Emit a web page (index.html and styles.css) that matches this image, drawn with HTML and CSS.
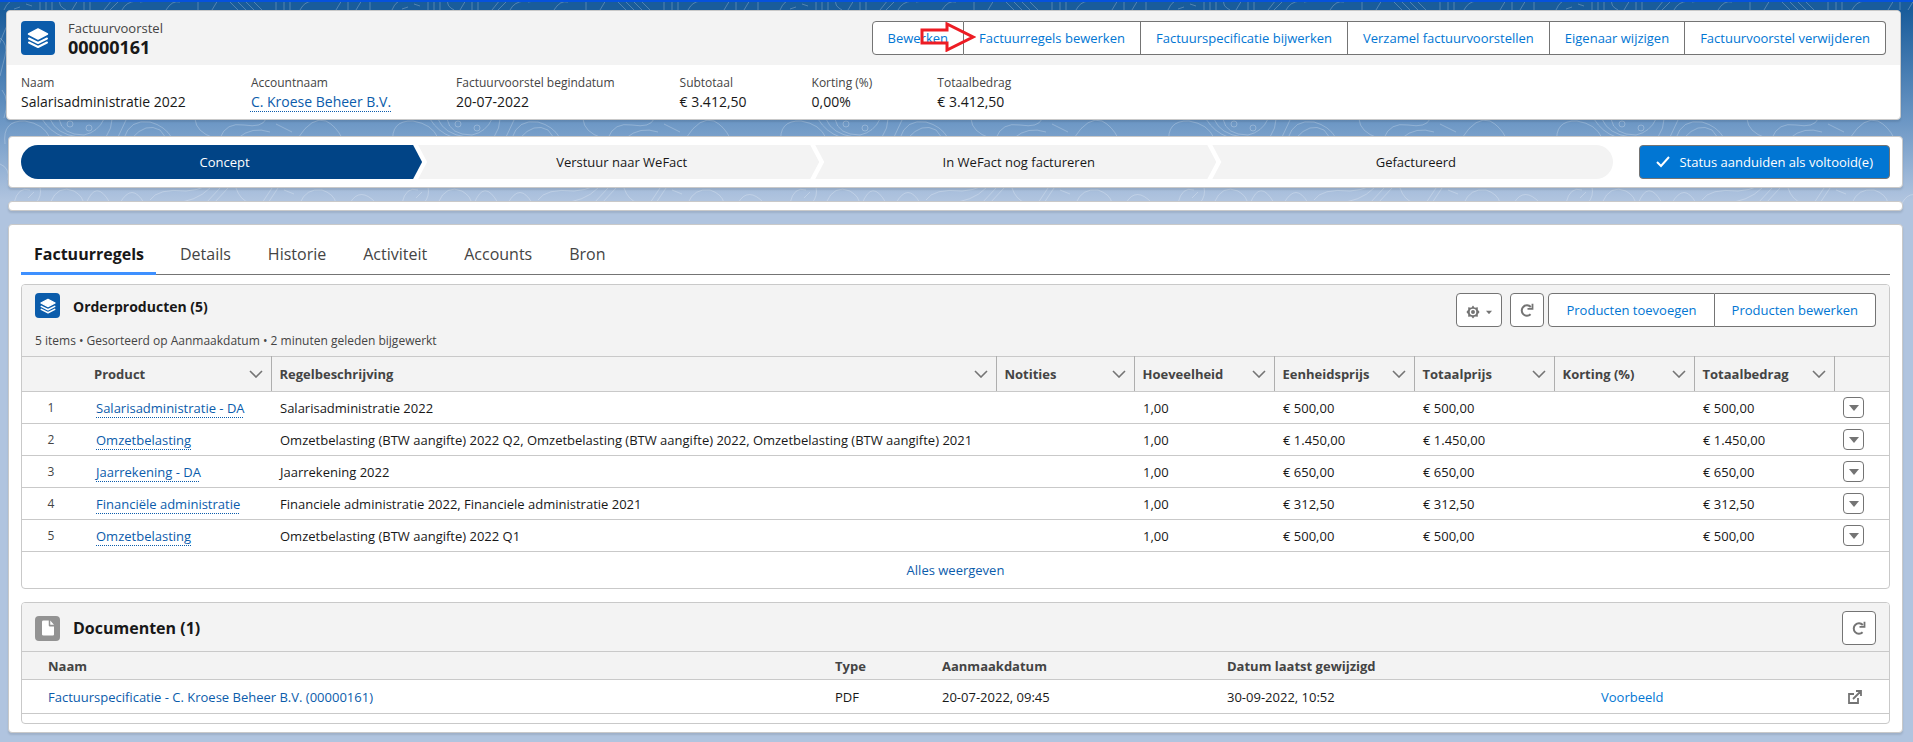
FILE: index.html
```
<!DOCTYPE html>
<html lang="nl">
<head>
    <meta charset="UTF-8">
    <meta name="viewport" content="width=device-width, initial-scale=1.0">
    <title>00000161 | Factuurvoorstel</title>
    <link rel="stylesheet" href="styles.css">
</head>
<body>
    <!-- Contour lines behind the cards -->
    <svg class="backdrop" aria-hidden="true">
        <defs>
            <pattern id="contours" width="388" height="210" patternUnits="userSpaceOnUse">
                <g fill="none" stroke="#fff" stroke-width="1" stroke-opacity="0.24">
                    <path d="M4 10 Q8 0 18 -2 M14 9 L20 7 M26 4 L32 6 M40 0 V10 M46 0 V10 M52 0 V10 M60 0 Q58 6 66 10 M72 10 L78 0 M84 0 V10 M90 0 V10 M104 10 L112 0 M110 10 L120 0 M122 10 Q126 2 136 1 M140 2 L146 1 M166 10 Q172 0 180 2 M198 0 V10 M212 10 L218 0 M228 0 L238 10 M236 0 L246 10 M244 0 L254 10 M252 0 L262 10 M276 0 V10 M284 0 V10 M290 0 V10 M300 10 Q304 2 312 1 M336 10 L342 0 M348 0 V10 M356 10 L362 0 M370 0 V10"/>
                    <path d="M-6 60 Q4 30 8 24 M0 38 Q8 44 5 56 T0 76 M2 90 Q10 100 4 118 M0 164 Q10 168 8 180 M384 40 Q392 56 386 74"/>
                    <path d="M5 144 Q2 120 25 121 Q44 124 50 138 M42 119 Q50 132 64 137 M50 119 Q56 134 78 137 M59 119 Q62 135 84 135 Q98 132 104 119 M106 137 Q112 128 112 119 M118 137 L126 120 M124 138 Q130 119 150 122 Q165 126 172 138 M132 138 Q146 122 160 130 L166 138 M195 119 Q196 132 214 138 M220 138 Q226 122 244 125 Q262 128 266 119 M238 138 Q252 126 270 132 M298 138 Q312 116 326 121 Q336 126 342 138 M276 124 L292 132"/>
                    <circle cx="70" cy="124" r="3"/>
                    <circle cx="89" cy="128" r="3"/>
                    <path d="M14 203 Q18 186 30 190 M28 198 L34 192 M36 203 Q42 196 40 187 M50 203 Q58 184 74 191 Q84 197 83 204 M86 204 Q96 178 110 203 M120 203 Q132 182 144 203 M150 200 Q158 188 186 191 Q198 190 204 187 M172 203 Q196 202 210 188 M206 203 L220 188 M214 203 L228 188 M236 188 Q240 200 250 203 M262 203 L272 188 M268 203 L278 188 M284 190 L294 194 M300 203 Q306 188 322 190 Q334 194 336 203 M350 203 Q360 186 376 203"/>
                </g>
            </pattern>
        </defs>
        <rect width="100%" height="100%" fill="url(#contours)"/>
    </svg>

    <!-- Icons shared by the whole page -->
    <svg class="sprite" aria-hidden="true">
        <symbol id="layers" viewBox="0 0 24 24">
            <path d="M12 3 L21.5 8 L12 13 L2.500 8 Z" fill="currentColor" stroke="currentColor" stroke-width="1.500" stroke-linejoin="round"/>
            <path d="M3 12.500 L12 17 L21 12.500 M3 16.500 L12 21 L21 16.500" fill="none" stroke="currentColor" stroke-width="2" stroke-linecap="round" stroke-linejoin="round"/>
        </symbol>
        <symbol id="chevron" viewBox="0 0 14 8">
            <path d="M1 1 L7 7 L13 1" fill="none" stroke="currentColor" stroke-width="1.600"/>
        </symbol>
        <symbol id="caret" viewBox="0 0 10 6">
            <path d="M0 0 H10 L5 6 Z" fill="currentColor"/>
        </symbol>
        <symbol id="refresh" viewBox="0 0 14 14">
            <path d="M10.600 11.200 A5.200 5.200 0 1 1 10.800 4" fill="none" stroke="currentColor" stroke-width="2"/>
            <path d="M12.500 0.800 V5.800 H7.500" fill="none" stroke="currentColor" stroke-width="1.800"/>
        </symbol>
    </svg>

    <div class="container">
        <header class="card record-header">
            <div class="record-top">
                <span class="object-icon large"><svg><use href="#layers"/></svg></span>
                <div class="record-title">
                    <span>Factuurvoorstel</span>
                    <h1>00000161</h1>
                </div>
                <div class="button-group">
                    <button>Bewerken</button>
                    <button>Factuurregels bewerken</button>
                    <button>Factuurspecificatie bijwerken</button>
                    <button>Verzamel factuurvoorstellen</button>
                    <button>Eigenaar wijzigen</button>
                    <button>Factuurvoorstel verwijderen</button>
                    <svg class="pointer-arrow" viewBox="0 0 56 30"><path d="M2 8 H27 V2 L53 15 L27 28 V21 H2 Z" fill="none" stroke="#ed1c24" stroke-width="3"/></svg>
                </div>
            </div>
            <dl class="fields">
                <div><dt>Naam</dt><dd>Salarisadministratie 2022</dd></div>
                <div><dt>Accountnaam</dt><dd><a class="dotted" href="#">C. Kroese Beheer B.V.</a></dd></div>
                <div><dt>Factuurvoorstel begindatum</dt><dd>20-07-2022</dd></div>
                <div><dt>Subtotaal</dt><dd>€ 3.412,50</dd></div>
                <div><dt>Korting (%)</dt><dd>0,00%</dd></div>
                <div><dt>Totaalbedrag</dt><dd>€ 3.412,50</dd></div>
            </dl>
        </header>

        <section class="card path">
            <ol class="stages">
                <li class="current">Concept</li>
                <li>Verstuur naar WeFact</li>
                <li>In WeFact nog factureren</li>
                <li>Gefactureerd</li>
            </ol>
            <button class="primary">
                <svg viewBox="0 0 14 12"><path d="M1 6 L5 10 L13 1" fill="none" stroke="currentColor" stroke-width="2"/></svg>
                Status aanduiden als voltooid(e)
            </button>
        </section>

        <div class="card spacer"></div>

        <main class="card content">
            <nav class="tabs">
                <a class="active" href="#">Factuurregels</a>
                <a href="#">Details</a>
                <a href="#">Historie</a>
                <a href="#">Activiteit</a>
                <a href="#">Accounts</a>
                <a href="#">Bron</a>
            </nav>

            <section class="related">
                <div class="related-head">
                    <span class="object-icon"><svg><use href="#layers"/></svg></span>
                    <h2>Orderproducten (5)</h2>
                    <button class="icon-button wide" aria-label="Lijstweergave-instellingen">
                        <svg class="gear" viewBox="0 0 16 16">
                            <path d="M8 0.500 L10 3 L13.500 2.500 L13.500 5.500 L15.500 8 L13.500 10.500 V13.500 L10 13 L8 15.500 L6 13 L2.500 13.500 V10.500 L0.500 8 L2.500 5.500 V2.500 L6 3 Z" fill="currentColor"/>
                            <circle cx="8" cy="8" r="3" fill="none" stroke="#fff" stroke-width="1.500"/>
                        </svg>
                        <svg class="small-caret"><use href="#caret"/></svg>
                    </button>
                    <button class="icon-button" aria-label="Vernieuwen"><svg><use href="#refresh"/></svg></button>
                    <div class="button-group">
                        <button>Producten toevoegen</button>
                        <button>Producten bewerken</button>
                    </div>
                </div>
                <p class="list-info">5 items • Gesorteerd op Aanmaakdatum • 2 minuten geleden bijgewerkt</p>
                <table class="products">
                    <colgroup>
                        <col class="col-number"><col class="col-product"><col>
                        <col class="col-notes"><col class="col-value"><col class="col-value"><col class="col-value"><col class="col-value"><col class="col-value">
                        <col class="col-menu">
                    </colgroup>
                    <thead>
                        <tr>
                            <th class="number"></th>
                            <th><span>Product<svg><use href="#chevron"/></svg></span></th>
                            <th><span>Regelbeschrijving<svg><use href="#chevron"/></svg></span></th>
                            <th><span>Notities<svg><use href="#chevron"/></svg></span></th>
                            <th><span>Hoeveelheid<svg><use href="#chevron"/></svg></span></th>
                            <th><span>Eenheidsprijs<svg><use href="#chevron"/></svg></span></th>
                            <th><span>Totaalprijs<svg><use href="#chevron"/></svg></span></th>
                            <th><span>Korting (%)<svg><use href="#chevron"/></svg></span></th>
                            <th><span>Totaalbedrag<svg><use href="#chevron"/></svg></span></th>
                            <th></th>
                        </tr>
                    </thead>
                    <tbody>
                        <tr>
                            <td class="number">1</td>
                            <td><a class="dotted" href="#">Salarisadministratie - DA</a></td>
                            <td>Salarisadministratie 2022</td>
                            <td></td><td>1,00</td><td>€ 500,00</td><td>€ 500,00</td><td></td><td>€ 500,00</td>
                            <td><button class="row-menu" aria-label="Acties"><svg><use href="#caret"/></svg></button></td>
                        </tr>
                        <tr>
                            <td class="number">2</td>
                            <td><a class="dotted" href="#">Omzetbelasting</a></td>
                            <td>Omzetbelasting (BTW aangifte) 2022 Q2, Omzetbelasting (BTW aangifte) 2022, Omzetbelasting (BTW aangifte) 2021</td>
                            <td></td><td>1,00</td><td>€ 1.450,00</td><td>€ 1.450,00</td><td></td><td>€ 1.450,00</td>
                            <td><button class="row-menu" aria-label="Acties"><svg><use href="#caret"/></svg></button></td>
                        </tr>
                        <tr>
                            <td class="number">3</td>
                            <td><a class="dotted" href="#">Jaarrekening - DA</a></td>
                            <td>Jaarrekening 2022</td>
                            <td></td><td>1,00</td><td>€ 650,00</td><td>€ 650,00</td><td></td><td>€ 650,00</td>
                            <td><button class="row-menu" aria-label="Acties"><svg><use href="#caret"/></svg></button></td>
                        </tr>
                        <tr>
                            <td class="number">4</td>
                            <td><a class="dotted" href="#">Financiële administratie</a></td>
                            <td>Financiele administratie 2022, Financiele administratie 2021</td>
                            <td></td><td>1,00</td><td>€ 312,50</td><td>€ 312,50</td><td></td><td>€ 312,50</td>
                            <td><button class="row-menu" aria-label="Acties"><svg><use href="#caret"/></svg></button></td>
                        </tr>
                        <tr>
                            <td class="number">5</td>
                            <td><a class="dotted" href="#">Omzetbelasting</a></td>
                            <td>Omzetbelasting (BTW aangifte) 2022 Q1</td>
                            <td></td><td>1,00</td><td>€ 500,00</td><td>€ 500,00</td><td></td><td>€ 500,00</td>
                            <td><button class="row-menu" aria-label="Acties"><svg><use href="#caret"/></svg></button></td>
                        </tr>
                    </tbody>
                </table>
                <a class="view-all" href="#">Alles weergeven</a>
            </section>

            <section class="related documents-card">
                <div class="related-head">
                    <span class="object-icon grey">
                        <svg viewBox="0 0 24 24"><path d="M6 2 H13 V8.500 Q13 10 14.500 10 H20 V20.500 Q20 22 18.500 22 H6 Q4 22 4 20.500 V3.500 Q4 2 6 2 Z M15 2 L20 7.500 H15 Z" fill="currentColor"/></svg>
                    </span>
                    <h2>Documenten (1)</h2>
                    <button class="icon-button" aria-label="Vernieuwen"><svg><use href="#refresh"/></svg></button>
                </div>
                <table class="documents">
                    <colgroup>
                        <col><col class="col-type"><col class="col-created"><col class="col-modified"><col class="col-preview"><col class="col-open">
                    </colgroup>
                    <thead>
                        <tr><th>Naam</th><th>Type</th><th>Aanmaakdatum</th><th>Datum laatst gewijzigd</th><th></th><th></th></tr>
                    </thead>
                    <tbody>
                        <tr>
                            <td><a href="#">Factuurspecificatie - C. Kroese Beheer B.V. (00000161)</a></td>
                            <td>PDF</td>
                            <td>20-07-2022, 09:45</td>
                            <td>30-09-2022, 10:52</td>
                            <td><a class="bright" href="#">Voorbeeld</a></td>
                            <td><a class="open" href="#" aria-label="Openen"><svg viewBox="0 0 14 14"><path d="M6 4 H1 V13 H10 V8 M5 9 L12 2 M8 1 H13 V6" fill="none" stroke="currentColor" stroke-width="1.800"/></svg></a></td>
                        </tr>
                    </tbody>
                </table>
            </section>
        </main>
    </div>
</body>
</html>
```
FILE: styles.css
```
* {
    box-sizing: border-box;
}

body {
    margin: 0;
    border-top: 2px solid #0652dd;
    background: linear-gradient(#195c9b 0, #195c9b 10px, #6f99c6 125px, #b0c4df 200px) no-repeat #b0c4df;
    color: #181818;
    font-family: 'Segoe UI', 'Open Sans', sans-serif;
    font-size: 13px;
    line-height: 18px;
}

h1, h2, p, dl, dd, ol {
    margin: 0;
    padding: 0;
}

a {
    color: #0b5cab;
    text-decoration: none;
}

a.dotted {
    text-decoration: underline dotted 1px;
    text-decoration-skip-ink: none;
    text-underline-offset: 4px;
}

a.bright {
    color: #0176d3;
}

button {
    font: inherit;
    cursor: pointer;
}

.sprite {
    position: absolute;
    width: 0;
    height: 0;
}

.backdrop {
    position: absolute;
    top: 0;
    left: 0;
    z-index: -1;
    width: 100%;
    height: 206px;
}

.container {
    padding: 8px 10px 9px 8px;
}

.card {
    background-color: white;
    border: 1px solid #c9c9c9;
    border-radius: 4px;
    box-shadow: 0 2px 2px rgba(0,0,0,0.1);
    margin-bottom: 13px;
}

/* Record header */
.record-header {
    margin: 0 2px 16px -2px;
}

.record-top {
    display: flex;
    align-items: center;
    height: 54px;
    padding: 0 14px;
    background-color: #f3f3f3;
    border-radius: 4px 4px 0 0;
}

.object-icon {
    display: flex;
    align-items: center;
    justify-content: center;
    width: 25px;
    height: 25px;
    border-radius: 4px;
    background-color: #0b5cab;
    color: white;
}

.object-icon svg {
    width: 18px;
    height: 18px;
}

.object-icon.large {
    width: 34px;
    height: 34px;
}

.object-icon.large svg {
    width: 24px;
    height: 24px;
}

.object-icon.grey {
    background-color: #939393;
}

.record-title {
    margin-left: 13px;
    color: #444;
}

.record-title span {
    display: block;
}

.record-title h1 {
    font-size: 18px;
    line-height: 20px;
    color: #181818;
}

.button-group {
    display: flex;
    position: relative;
    margin-left: auto;
}

.button-group button {
    height: 34px;
    padding: 0 17px;
    background-color: white;
    border: 1px solid #747474;
    border-left-width: 0;
    color: #0176d3;
}

.button-group button:first-child {
    border-left-width: 1px;
    border-radius: 4px 0 0 4px;
}

.button-group button:last-of-type {
    border-radius: 0 4px 4px 0;
}

.record-top .button-group button {
    padding: 0 15px;
}

.pointer-arrow {
    position: absolute;
    left: 48px;
    top: 1px;
    width: 56px;
    height: 30px;
}

.fields {
    display: flex;
    gap: 65px;
    padding: 9px 14px 7px;
}

.fields dt {
    font-size: 12px;
    color: #444;
}

.fields dd {
    font-size: 14px;
    line-height: 20px;
}

/* Path */
.path {
    display: flex;
    gap: 26px;
    padding: 8px 12px;
}

.stages {
    display: flex;
    flex: 1;
    list-style: none;
    border-radius: 17px;
    overflow: hidden;
}

.stages li {
    flex: 1;
    height: 34px;
    padding-left: 6px;
    line-height: 35px;
    text-align: center;
    background-color: #f3f3f3;
    clip-path: polygon(0 0, calc(100% - 9px) 0, 100% 50%, calc(100% - 9px) 100%, 0 100%, 9px 50%);
}

.stages li + li {
    margin-left: -4px;
}

.stages .current {
    background-color: #014486;
    color: white;
    clip-path: polygon(0 0, calc(100% - 9px) 0, 100% 50%, calc(100% - 9px) 100%, 0 100%);
}

.stages li:last-child {
    clip-path: polygon(0 0, 100% 0, 100% 100%, 0 100%, 9px 50%);
}

.primary {
    display: flex;
    align-items: center;
    justify-content: center;
    gap: 9px;
    height: 34px;
    padding: 0 16px;
    background-color: #0176d3;
    border: 1px solid #747474;
    border-radius: 4px;
    color: white;
}

.primary svg {
    width: 14px;
    height: 12px;
}

.spacer {
    height: 10px;
}

/* Tabs */
.content {
    margin-bottom: 0;
    padding: 9px 12px 8px;
}

.tabs {
    display: flex;
    gap: 11px;
    height: 41px;
    border-bottom: 1px solid #747474;
}

.tabs a {
    height: 41px;
    padding: 0 13px;
    font-size: 16px;
    line-height: 40px;
    color: #444;
}

.tabs .active {
    padding: 0 12px 0 13px;
    border-bottom: 3px solid #3e90ff;
    font-weight: 700;
    color: #181818;
}

/* Related lists */
.related {
    margin-top: 9px;
    border: 1px solid #c9c9c9;
    border-radius: 4px;
    overflow: hidden;
}

.related-head {
    display: flex;
    padding: 8px 13px 0;
    background-color: #f3f3f3;
}

.related-head h2 {
    margin: 0 auto 0 13px;
    font-size: 14px;
    line-height: 28px;
}

.related-head .button-group {
    margin-left: 0;
}

.icon-button {
    display: flex;
    align-items: center;
    justify-content: center;
    gap: 6px;
    width: 34px;
    height: 34px;
    margin-right: 4px;
    padding: 0;
    background-color: white;
    border: 1px solid #747474;
    border-radius: 4px;
    color: #747474;
}

.icon-button svg {
    width: 14px;
    height: 14px;
}

.icon-button.wide {
    width: 46px;
    margin-right: 8px;
    padding-top: 4px;
}

.icon-button .small-caret {
    width: 6px;
    height: 5px;
}

.list-info {
    padding: 5px 13px 6px;
    background-color: #f3f3f3;
    font-size: 12px;
    color: #444;
}

table {
    width: 100%;
    table-layout: fixed;
    border-collapse: collapse;
}

th {
    background-color: #f3f3f3;
    text-align: left;
    color: #444;
}

.products th {
    height: 35px;
    padding: 0 8px;
    border: 1px solid #aeaeae;
    border-top-color: #c9c9c9;
    border-bottom-color: #c9c9c9;
}

.products th.number, .products th:last-child {
    border-left: 0;
    border-right: 0;
}

.products th:nth-child(2) {
    border-left: 0;
}

.products th span {
    display: flex;
    align-items: center;
    justify-content: space-between;
}

.products th svg {
    width: 14px;
    height: 8px;
    color: #747474;
}

.products td {
    height: 32px;
    padding: 0 9px;
    border-bottom: 1px solid #c9c9c9;
    white-space: nowrap;
}

.products .number {
    padding: 0 14px 0 8px;
    font-size: 12px;
    text-align: center;
    color: #444;
}

.products td:nth-child(2) {
    padding-left: 10px;
}

.col-number {
    width: 64px;
}

.col-product {
    width: 185px;
}

.col-notes {
    width: 138px;
}

.col-value {
    width: 140px;
}

.col-menu {
    width: 55px;
}

.row-menu {
    display: flex;
    align-items: center;
    justify-content: center;
    width: 21px;
    height: 21px;
    padding: 0;
    background-color: white;
    border: 1px solid #747474;
    border-radius: 4px;
    color: #747474;
}

.row-menu svg {
    width: 10px;
    height: 6px;
}

.view-all {
    display: block;
    line-height: 36px;
    text-align: center;
}

/* Documents */
.documents-card {
    margin-top: 13px;
    padding-bottom: 9px;
}

.documents-card .related-head {
    align-items: center;
    padding-bottom: 6px;
}

.documents-card h2 {
    font-size: 16px;
}

.documents-card .icon-button {
    margin-right: 0;
}

.documents th {
    height: 28px;
    padding: 0;
    border-top: 1px solid #c9c9c9;
    border-bottom: 1px solid #c9c9c9;
}

.documents td {
    height: 34px;
    padding: 0;
    border-bottom: 1px solid #c9c9c9;
}

.documents th:first-child, .documents td:first-child {
    padding-left: 26px;
}

.col-type {
    width: 107px;
}

.col-created {
    width: 285px;
}

.col-modified {
    width: 374px;
}

.col-preview {
    width: 247px;
}

.col-open {
    width: 41px;
}

.open {
    display: flex;
    color: #747474;
}

.open svg {
    width: 14px;
    height: 14px;
}
```
